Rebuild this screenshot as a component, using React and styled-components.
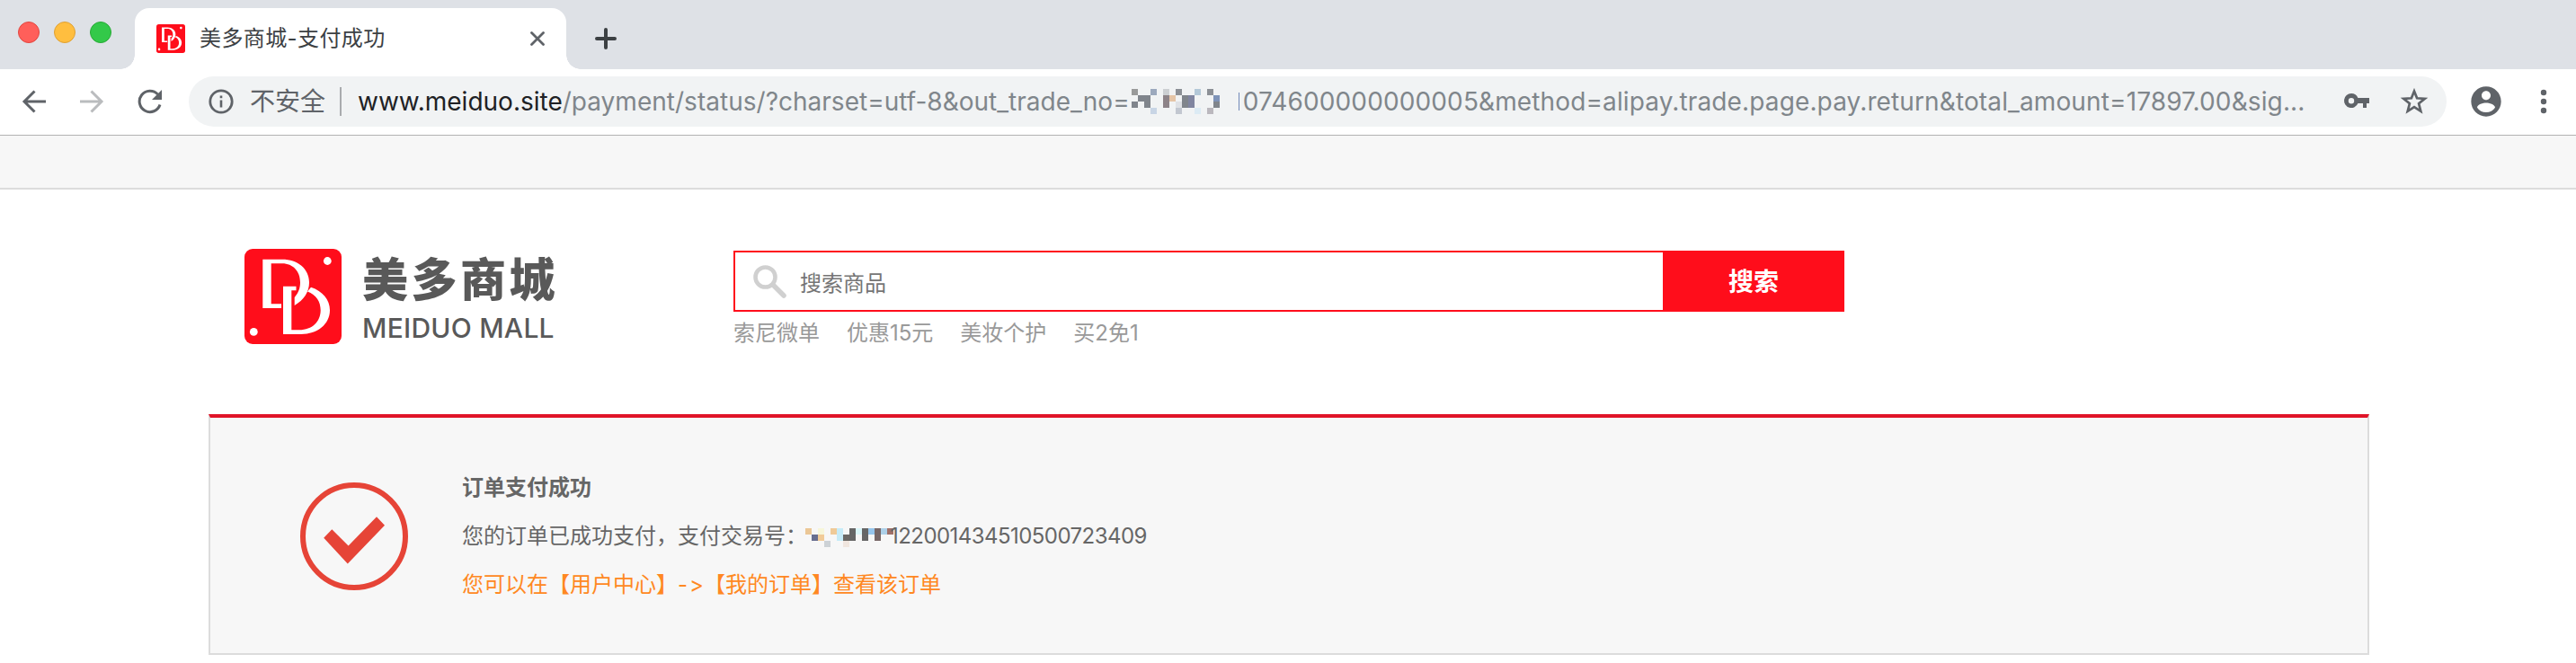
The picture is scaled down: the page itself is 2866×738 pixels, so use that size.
import React from 'react';
import styled, { createGlobalStyle } from 'styled-components';

const GlobalStyle = createGlobalStyle`
  * { box-sizing: border-box; }
  body {
    margin: 0;
    background: #fff;
    font-family: Inter, "Noto Sans CJK SC", sans-serif;
    font-size: 24px;
    overflow: hidden;
  }
  svg { display: block; flex: none; }
`;

const Page = styled.div`
  width: 100%;
  height: 738px;
  overflow: hidden;
`;

/* Browser chrome */
const TabStrip = styled.div`
  display: flex;
  align-items: flex-start;
  height: 77px;
  background: #dee1e6;
`;

const WindowControls = styled.div`
  display: flex;
  gap: 16px;
  padding: 24px 26px 0 20px;
`;

const ControlDot = styled.span`
  width: 24px;
  height: 24px;
  border-radius: 50%;
  background: ${(p) => p.$fill};
  border: 1px solid ${(p) => p.$edge};
`;

const Tab = styled.div`
  position: relative;
  display: flex;
  align-items: center;
  width: 480px;
  height: 68px;
  margin-top: 9px;
  padding: 0 24px;
  background: #fff;
  border-radius: 16px 16px 0 0;

  &::before,
  &::after {
    content: '';
    position: absolute;
    bottom: 0;
    width: 16px;
    height: 16px;
  }
  &::before {
    left: -16px;
    background: radial-gradient(circle at 0 0, transparent 15.5px, #fff 16px);
  }
  &::after {
    right: -16px;
    background: radial-gradient(circle at 100% 0, transparent 15.5px, #fff 16px);
  }
`;

const TabTitle = styled.span`
  flex: 1;
  margin-left: 16px;
  line-height: 32px;
  letter-spacing: 0.4px;
  color: #3c4043;
  white-space: nowrap;
`;

const NewTab = styled.div`
  margin: 31px 0 0 32px;
`;

const Toolbar = styled.div`
  display: flex;
  align-items: center;
  height: 74px;
  padding: 0 28px 2px 24px;
  border-bottom: 1px solid #b3b3b3;
  background: #fff;
`;

const NavButtons = styled.div`
  display: flex;
  gap: 36px;
  margin-right: 28px;
`;

const AddressBar = styled.div`
  display: flex;
  align-items: center;
  flex: 1;
  height: 56px;
  padding: 0 20px 0 22px;
  border-radius: 28px;
  background: #f1f3f4;
  font-size: 28px;
  line-height: 40px;
  color: #80868b;
  white-space: nowrap;
`;

const Security = styled.span`
  margin-left: 18px;
  color: #5f6368;
`;

const Divider = styled.span`
  width: 2px;
  height: 32px;
  margin: 0 18px 0 16px;
  background: #a9abae;
`;

const Domain = styled.span`
  color: #202124;
`;

const UrlPath = styled.span`
  margin-right: 2px;
  letter-spacing: 0.02px;
`;

const UrlRest = styled.span`
  letter-spacing: 0.125px;
  margin-left: 4px;
`;

const CutMark = styled.span`
  width: 1px;
  height: 20px;
  margin-left: 21px;
  background: #7189b8;
`;

const AddressActions = styled.div`
  display: flex;
  gap: 33px;
  margin-left: auto;
`;

const ProfileActions = styled.div`
  display: flex;
  align-items: center;
  gap: 36px;
  margin-left: 24px;
`;

/* Shop page */
const TopBar = styled.div`
  height: 60px;
  background: #f7f7f7;
  border-bottom: 2px solid #dcdcdc;
`;

const ShopHeader = styled.header`
  display: flex;
  align-items: flex-start;
  height: 250px;
  padding: 66px 0 0 272px;
`;

const Brand = styled.div`
  display: flex;
  width: 544px;
`;

const BrandText = styled.div`
  padding-top: 2px;
  margin-left: 23px;
  color: #595959;
  white-space: nowrap;
`;

const BrandName = styled.div`
  height: 66px;
  font-size: 51px;
  font-weight: 900;
  line-height: 66px;
  letter-spacing: 3.5px;
`;

const BrandLatin = styled.div`
  font-size: 30px;
  font-weight: 500;
  line-height: 40px;
  letter-spacing: 0.25px;
`;

const Search = styled.div`
  width: 1236px;
  margin-top: 2px;
`;

const SearchBox = styled.div`
  display: flex;
  height: 68px;
`;

const SearchField = styled.div`
  display: flex;
  align-items: center;
  flex: 1;
  padding: 1px 0 0 20px;
  border: 2px solid #ff0d1b;
  border-right: 0;
  color: #757575;
`;

const Placeholder = styled.span`
  margin: -1px 0 0 15px;
`;

const SearchButton = styled.button`
  width: 202px;
  padding: 0 0 2px;
  border: 0;
  background: #ff0d1b;
  color: #fff;
  font: 700 28px Inter, "Noto Sans CJK SC", sans-serif;
`;

const HotLinks = styled.div`
  display: flex;
  gap: 30px;
  margin-top: 6px;
  line-height: 36px;
  color: #999;
`;

const ResultCard = styled.section`
  display: flex;
  align-items: flex-start;
  width: 2404px;
  height: 268px;
  margin-left: 232px;
  padding: 72px 0 0 100px;
  background: #f7f7f7;
  border: 2px solid #dcdcdc;
  border-top: 4px solid #e01428;
`;

const Messages = styled.div`
  margin: -21px 0 0 60px;
`;

const Message = styled.p`
  display: flex;
  align-items: center;
  margin: 0;
  height: 54px;
  line-height: 54px;
  white-space: nowrap;
  font-weight: ${(p) => (p.$bold ? 700 : 400)};
  color: ${(p) => (p.$accent ? '#ff8822' : '#666')};
`;

const HiddenDigits = styled.span`
  margin: 3px 0 0 -2px;
`;

const TradeNumber = styled.span`
  margin-left: -4px;
  letter-spacing: -0.55px;
`;

const Arrow = styled.span`
  display: inline-block;
  width: 29px;
  text-align: center;
  letter-spacing: 2px;
`;

function BrandMark({ width, height }) {
  return (
    <svg width={width} height={height} viewBox="0 0 108 106" preserveAspectRatio="none">
      <rect width="108" height="106" rx="9" fill="#ff0d1b" />
      <g fill="#fff">
        <path
          fillRule="evenodd"
          d="M20.3 11.7H42C59 11.7 72 22 72 37.5C72 48 66 57 55.7 63V54C60 49 62 44 62 37.5C62 25 54 16.3 42 16.3H29.7V61.3H41V66H20.3Z"
        />
        <path d="M43 41.7H57.5V46.3H52.3V90.3H61C75.5 90.3 84.7 81 84.7 68.3C84.7 59 80 51 70 47.5L74 42.7C87 47 95 56.5 95 68.3C95 84 81 95 63 95H43Z" />
        <circle cx="92.3" cy="13.5" r="4.4" />
        <circle cx="10.3" cy="92.4" r="4.4" />
      </g>
    </svg>
  );
}

function Mosaic({ cells, cols, rows }) {
  return (
    <svg width={cols * 7} height={rows * 7} shapeRendering="crispEdges">
      {cells.map(([col, row, fill, span = 1]) => (
        <rect key={`${col}-${row}`} x={col * 7} y={row * 7} width="7" height={7 * span} fill={fill} />
      ))}
    </svg>
  );
}

const URL_CELLS = [
  [0, 0, '#999a9a'], [3, 0, '#9ca9bd'], [5, 0, '#cccfd2'], [7, 0, '#8c9096'], [10, 0, '#b3c8d8'], [12, 0, '#8c9096'],
  [1, 1, '#80858c'], [2, 1, '#80858c', 2], [5, 1, '#8d8388', 2], [6, 1, '#e5c5a7'], [8, 1, '#80858c', 2],
  [9, 1, '#8085a0', 2], [13, 1, '#7e93b8'], [0, 2, '#80858c'], [7, 2, '#dfe1e5'], [13, 2, '#80858c'],
  [3, 3, '#c8d5e5'], [7, 3, '#c2c7d0'], [10, 3, '#dcebf4'], [12, 3, '#bbb8be'],
];

const TRADE_CELLS = [
  [0, 0, '#ebc796'], [2, 0, '#f7f6da'], [4, 0, '#efca98'], [5, 0, '#c6ebf8', 2], [7, 0, '#666', 2], [8, 0, '#dbf6f9'],
  [9, 0, '#666', 2], [10, 0, '#96c5ec'], [11, 0, '#776767', 2], [12, 0, '#add0e8'], [13, 0, '#a07068'],
  [1, 1, '#686e90'], [2, 1, '#f1cb98'], [6, 1, '#6b6865'], [3, 2, '#cdd2d6'], [6, 2, '#f0e6df'],
];

function ArrowIcon({ color, flip }) {
  return (
    <svg width="28" height="28" viewBox="0 0 28 28" fill="none" stroke={color} strokeWidth="3">
      <path
        d={flip ? 'M1 14H25M13.5 2.5L25 14L13.5 25.5' : 'M27 14H3M14.5 2.5L3 14L14.5 25.5'}
      />
    </svg>
  );
}

const HOT_WORDS = ['索尼微单', '优惠15元', '美妆个护', '买2免1'];

export default function App() {
  return (
    <Page>
      <GlobalStyle />
      <TabStrip>
        <WindowControls>
          <ControlDot $fill="#ff5f5a" $edge="#e2463f" />
          <ControlDot $fill="#ffbe3f" $edge="#dfa033" />
          <ControlDot $fill="#33c949" $edge="#27aa35" />
        </WindowControls>
        <Tab>
          <BrandMark width={32} height={32} />
          <TabTitle>美多商城-支付成功</TabTitle>
          <svg width="16" height="16" viewBox="0 0 16 16" stroke="#5f6368" strokeWidth="2.8" strokeLinecap="round">
            <path d="M1.5 1.5L14.5 14.5M14.5 1.5L1.5 14.5" />
          </svg>
        </Tab>
        <NewTab>
          <svg width="24" height="24" viewBox="0 0 24 24" stroke="#3c4043" strokeWidth="4" strokeLinecap="round">
            <path d="M12 2V22M2 12H22" />
          </svg>
        </NewTab>
      </TabStrip>

      <Toolbar>
        <NavButtons>
          <ArrowIcon color="#5f6368" />
          <ArrowIcon color="#babcbe" flip />
          <svg width="30" height="28" viewBox="0 0 30 28">
            <path d="M23.5 6A11.7 11.7 0 1 0 26 17.5" fill="none" stroke="#5f6368" strokeWidth="3" />
            <path d="M28 1V12H17Z" fill="#5f6368" />
          </svg>
        </NavButtons>
        <AddressBar>
          <svg width="28" height="28" viewBox="0 0 28 28">
            <circle cx="14" cy="14" r="12.2" fill="none" stroke="#5f6368" strokeWidth="2.8" />
            <path d="M12.7 12.5H15.3V20.5H12.7ZM12.7 7.5H15.3V10.2H12.7Z" fill="#5f6368" />
          </svg>
          <Security>不安全</Security>
          <Divider />
          <Domain>www.meiduo.site</Domain>
          <UrlPath>/payment/status/?charset=utf-8&amp;out_trade_no=</UrlPath>
          <Mosaic cells={URL_CELLS} cols={14} rows={4} />
          <CutMark />
          <UrlRest>074600000000005&amp;method=alipay.trade.page.pay.return&amp;total_amount=17897.00&amp;sig...</UrlRest>
          <AddressActions>
            <svg width="30" height="30" viewBox="0 0 30 30" fill="#5f6368">
              <path
                fillRule="evenodd"
                d="M9 6A8 8 0 1 0 16.4 17H22V22H26V17H29V11H16.4A8 8 0 0 0 9 6ZM9 11A3.2 3.2 0 1 1 9 17.4A3.2 3.2 0 1 1 9 11Z"
              />
            </svg>
            <svg width="32" height="30" viewBox="0 0 32 30" fill="none" stroke="#5f6368" strokeWidth="2.7">
              <path d="M16 3.5L19.1 11.3L27.8 11.9L21.1 17.3L23.3 25.8L16 21.2L8.7 25.8L10.9 17.3L4.2 11.9L12.9 11.3Z" />
            </svg>
          </AddressActions>
        </AddressBar>
        <ProfileActions>
          <svg width="40" height="40" viewBox="0 0 24 24" fill="#5f6368">
            <path d="M12 2C6.48 2 2 6.48 2 12s4.48 10 10 10 10-4.48 10-10S17.52 2 12 2zm0 3c1.66 0 3 1.34 3 3s-1.34 3-3 3-3-1.34-3-3 1.34-3 3-3zm0 14.2c-2.5 0-4.71-1.28-6-3.22.03-1.99 4-3.08 6-3.08 1.99 0 5.97 1.09 6 3.08-1.29 1.94-3.5 3.22-6 3.22z" />
          </svg>
          <svg width="16" height="28" viewBox="0 0 16 28" fill="#5f6368">
            <circle cx="8" cy="4" r="3.2" />
            <circle cx="8" cy="14" r="3.2" />
            <circle cx="8" cy="24" r="3.2" />
          </svg>
        </ProfileActions>
      </Toolbar>

      <TopBar />
      <ShopHeader>
        <Brand>
          <BrandMark width={108} height={106} />
          <BrandText>
            <BrandName>美多商城</BrandName>
            <BrandLatin>MEIDUO MALL</BrandLatin>
          </BrandText>
        </Brand>
        <Search>
          <SearchBox>
            <SearchField>
              <svg width="37" height="37" viewBox="0 0 37 37" fill="none" stroke="#d0d0d0">
                <circle cx="13.5" cy="13.5" r="11" strokeWidth="4.6" />
                <path d="M22 22L34 34" strokeWidth="5.5" strokeLinecap="round" />
              </svg>
              <Placeholder>搜索商品</Placeholder>
            </SearchField>
            <SearchButton>搜索</SearchButton>
          </SearchBox>
          <HotLinks>
            {HOT_WORDS.map((word) => (
              <span key={word}>{word}</span>
            ))}
          </HotLinks>
        </Search>
      </ShopHeader>

      <ResultCard>
        <svg width="120" height="120" viewBox="0 0 120 120">
          <circle cx="60" cy="60" r="57" fill="none" stroke="#e64437" strokeWidth="6" />
          <path d="M26.2 61.7L35.3 52.3L53.6 70.5L85 38.3L94 47.7L52.8 90.5Z" fill="#e64437" />
        </svg>
        <Messages>
          <Message $bold>订单支付成功</Message>
          <Message>
            您的订单已成功支付，支付交易号：
            <HiddenDigits>
              <Mosaic cells={TRADE_CELLS} cols={14} rows={3} />
            </HiddenDigits>
            <TradeNumber>122001434510500723409</TradeNumber>
          </Message>
          <Message $accent>
            您可以在【用户中心】
            <Arrow>-&gt;</Arrow>
            【我的订单】查看该订单
          </Message>
        </Messages>
      </ResultCard>
    </Page>
  );
}
